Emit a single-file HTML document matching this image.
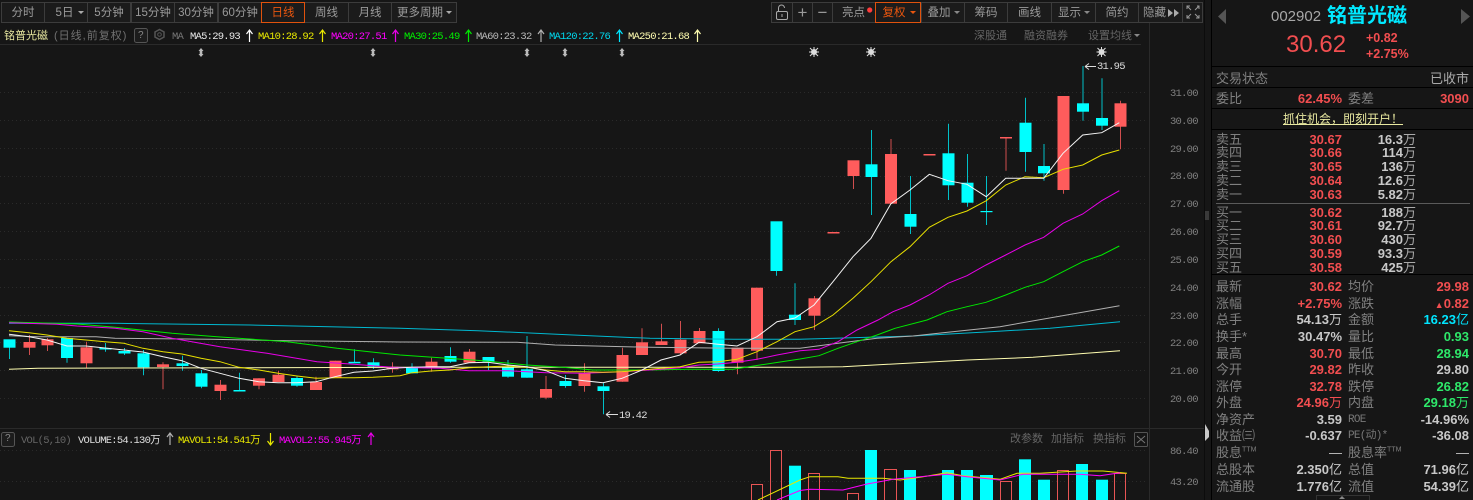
<!DOCTYPE html>
<html lang="zh"><head><meta charset="utf-8"><title>铭普光磁</title>
<style>
html,body{margin:0;padding:0;background:#161616;width:1473px;height:500px;overflow:hidden}
body{position:relative;font-family:"Liberation Sans","WenQuanYi Zen Hei","Noto Sans CJK SC",sans-serif;color:#808080}
svg{position:absolute;left:0;top:0}
.t{position:absolute;white-space:nowrap;line-height:16px;font-size:13px;margin-top:1px}
.b{position:absolute;top:2px;height:19px;line-height:20px;border:1px solid #3c3c3c;background:#1b1b1b;color:#9a9a9a;font-size:11.5px;text-align:center;box-sizing:content-box;margin-left:-1px}
.o{border:1px solid #e0520d;color:#e8560f;z-index:2;height:19px}
.m{font-family:"Liberation Mono","WenQuanYi Zen Hei",monospace;font-size:10.5px;letter-spacing:-.75px;margin-top:2px}
.n{font-weight:bold;font-family:"Liberation Sans","WenQuanYi Zen Hei",sans-serif}
.s{font-size:11px;color:#666}
.r{color:#f24e50}.g{color:#2ee86a}.w{color:#c8c8c8}.c{color:#00e5ff}
.v{font-weight:normal;font-size:13px}
</style></head><body>
<svg width="1473" height="500" viewBox="0 0 1473 500" fill="none">
<g stroke="#2a2a2a" stroke-dasharray="1 3">
<path d="M0 92.5H1148M0 120.5H1148M0 148.5H1148M0 176.5H1148M0 203.5H1148M0 231.5H1148M0 259.5H1148M0 287.5H1148M0 315.5H1148M0 342.5H1148M0 370.5H1148M0 398.5H1148M0 450.5H1148M0 481.5H1148"/>
</g>
<path d="M0 44.5H1141M0 428.5H1204M1149.5 23V500" stroke="#2a2a2a"/>
<path d="M1216 203.5H1470" stroke="#5a5a5a"/>
<path d="M1204.5 0V500" stroke="#0c0c0c"/>
<path d="M1211.5 0V500M1212 66.5H1473M1212 87.5H1473M1212 108.5H1473M1212 129.5H1473M1212 274.5H1473" stroke="#000"/>
<!-- volume -->
<g fill="#00ffff">
<rect x="789" y="465.7" width="12" height="35"/><rect x="865" y="450" width="12" height="50"/><rect x="904" y="470" width="12" height="30"/><rect x="942" y="470" width="12" height="30"/><rect x="961" y="470" width="12" height="30"/><rect x="980" y="475" width="13" height="25"/><rect x="1019" y="459.3" width="12" height="41"/><rect x="1038" y="479.7" width="12" height="21"/><rect x="1076" y="464" width="12" height="36"/><rect x="1096" y="479.7" width="12" height="21"/>
</g>
<g stroke="#e85555">
<rect x="751.5" y="484.5" width="11" height="20"/><rect x="770.5" y="450.5" width="11" height="54"/><rect x="808.5" y="473.5" width="11" height="30"/><rect x="847.5" y="493.5" width="11" height="10"/><rect x="884.5" y="469.5" width="12" height="35"/><rect x="1000.5" y="481.5" width="11" height="22"/><rect x="1057.5" y="470.5" width="11" height="34"/><rect x="1114.5" y="473.5" width="11" height="30"/>
</g>
<path d="M758 500L800 480L810 476.7H838L848 478.3H883L900 480L920 477.3L947 472.7L963 475.7L1000 479.3L1017 473.3H1040L1077 471H1103L1127 473.3" stroke="#e8e800"/>
<path d="M777 500L800 490.5L810 489.3L843 490L867 484L893 479.3L920 476.7L947 474.3L967 476.7L1000 480L1023 474.3H1080L1100 475.7L1120 472.7" stroke="#ff00ff"/>
<!-- wicks -->
<path stroke="#00c0c8" d="M9.5 347V359M67 338V362.7M105.5 343V351.7M124.5 348V355M143.5 350V375.3M182.5 355.7V370.7M201.5 370V388.3M239.5 372.7V390.3M297 376V386.7M354.5 349.3V362.3M373.5 358.3V369M412 363.3V373.3M450.5 347.3V362.7M488.5 357V370M508 360V377.7M527 336V377.7M565.5 375V387.7M603.5 382.7V414.3M718.5 328.3V371.7M776.5 271V275.7M795 283.3V325M871.5 130V215M910.5 176V234M948.5 123.7V200M967.5 154V206.7M986.5 176V225M1025.5 97.7V171.7M1044 144V180.7M1083 66V120.7M1102 78.3V130"/>
<path stroke="#d04e4e" d="M29.5 335V355M47.5 338V351M86.5 341.7V368M163 362.3V389.3M220.5 380V400M259 378.3V389.3M278.5 370.7V382M316 376.7V390M335.5 360.7V378M392.5 362.3V372.7M431.5 357.7V371.7M469.5 349V362.7M546 376V399.3M584.5 363.3V391.7M622.5 347.7V381.7M642 328.3V355M661.5 323.7V345M680.5 321V355M699.5 328V343.3M737.5 347.7V374.3M757 287.7V360M814.5 296V330M853.5 176V189M891 139V154M1006 137.7V170.7M1063.5 190V193.7M1120.5 100.7V149.3"/>
<!-- cyan bodies -->
<g fill="#00ffff">
<rect x="3.5" y="339.3" width="12" height="8.4"/><rect x="61" y="338" width="12" height="20"/><rect x="99.5" y="348" width="12" height="1.5"/><rect x="118.5" y="351" width="12" height="2.5"/><rect x="137.5" y="353.3" width="12" height="14"/><rect x="176.5" y="363.3" width="12" height="2.7"/><rect x="195.5" y="373.3" width="12" height="13.4"/><rect x="233.5" y="390" width="12" height="1.5"/><rect x="291" y="378" width="12" height="7.7"/><rect x="348.5" y="361.8" width="12" height="1.5"/><rect x="367.5" y="362.3" width="12" height="4.4"/><rect x="406" y="367.3" width="12" height="6"/><rect x="444.5" y="356" width="12" height="5.7"/><rect x="482.5" y="357" width="12" height="4.7"/><rect x="502" y="367.3" width="12" height="9.4"/><rect x="521" y="369.3" width="12" height="8.4"/><rect x="559.5" y="381" width="12" height="5"/><rect x="597.5" y="386.3" width="12" height="4.7"/><rect x="712.5" y="331" width="12" height="40"/><rect x="770.5" y="221.3" width="12" height="49.7"/><rect x="789" y="314.7" width="12" height="5.3"/><rect x="865.5" y="164.3" width="12" height="12.7"/><rect x="904.5" y="214" width="12" height="12.7"/><rect x="942.5" y="153.3" width="12" height="32"/><rect x="961.5" y="182.7" width="12" height="20"/><rect x="980.5" y="211" width="12" height="1.2"/><rect x="1019.5" y="122.7" width="12" height="29.3"/><rect x="1038" y="166" width="12" height="7.3"/><rect x="1077" y="103.3" width="12" height="8.4"/><rect x="1096" y="118" width="12" height="7.7"/>
</g>
<!-- red bodies -->
<g fill="#ff5c5c">
<rect x="23.5" y="342" width="12" height="5.7"/><rect x="41.5" y="339.3" width="12" height="6"/><rect x="80.5" y="347.3" width="12" height="16"/><rect x="157" y="364.3" width="12" height="2.7"/><rect x="214.5" y="384.7" width="12" height="6.3"/><rect x="253" y="378.3" width="12" height="7.4"/><rect x="272.5" y="374.7" width="12" height="7.3"/><rect x="310" y="382" width="12" height="8"/><rect x="329.5" y="360.7" width="12" height="17.3"/><rect x="386.5" y="366.7" width="12" height="2.6"/><rect x="425.5" y="361.7" width="12" height="5.6"/><rect x="463.5" y="351.7" width="12" height="11"/><rect x="540" y="389" width="12" height="8.7"/><rect x="578.5" y="373.3" width="12" height="12.7"/><rect x="616.5" y="355" width="12" height="26.7"/><rect x="636" y="342.3" width="12" height="12.7"/><rect x="655.5" y="341.3" width="12" height="3.7"/><rect x="674.5" y="339.7" width="12" height="13.6"/><rect x="693.5" y="331" width="12" height="12.3"/><rect x="731.5" y="347.7" width="12" height="15"/><rect x="751" y="287.7" width="12" height="63"/><rect x="808.5" y="298.3" width="12" height="17.4"/><rect x="827.5" y="232" width="12" height="1.5"/><rect x="847.5" y="160.3" width="12" height="15.7"/><rect x="885" y="154" width="12" height="49.7"/><rect x="923.5" y="154" width="12" height="1.5"/><rect x="1000" y="137" width="12" height="1.5"/><rect x="1057.5" y="96" width="12" height="94"/><rect x="1114.5" y="103.3" width="12" height="23.4"/>
</g>
<!-- MAs -->
<g stroke-width="1">
<path stroke="#fffdb0" d="M9 369.3L38 368.3L400 367.3H800L843 366.7L967 360L1033 357.3L1120 350.7"/>
<path stroke="#00b8d0" d="M9 323.3H115L250 325L400 328.3L478 330.7L573 335L650 338.3L733 339.3H800L913 336L990 331.7L1050 328.3L1120 321.7"/>
<path stroke="#b0b0b0" d="M9 335.7L38 336.7H96L115 338.3L210 339.3L287 340.7L382 341.7L400 342L517 342.3L555 345L650 347.3L733 348.3H800L838 343.3L877 338.3L913 336L943 332.7L1000 326.7L1119.5 305.7"/>
<path stroke="#00e800" d="M9 322L77 324L115 327.3L172 333.3L217 336.7L287 341.7L337 348.3L400 355L440 357.7L483 360.7L527 365L563 367.3L593 370H650L687 369.3H733L760 365L800 359L819 355.7L838 348.3L857 341.7L877 335L895 328.3L927 320L947 311.7L967 306.7L986 302.3L1005.7 295L1025 287.3L1043.7 281.7L1063 271.7L1082.7 261.7L1101.7 255L1119.3 246"/>
<path stroke="#e800e8" d="M9 322.7L57 324.3L77 326L115 328.3L143 331.7L172 338.3L220 346.7L267 353.3L317 361.7L354 364.3L392 367.3L440 368.3L469 370.7H508L546 372.7L584 373.3L622 371.7L661 369.3L680 367.7L699 365L718 364L737 362.3L757 359.3L777 355L800 350.7L819 349.3L838 341.7L857 330L878 320L893 311.7L910 305L929 295L948 283.3L967 275.7L986 265L1005.7 255L1025 245L1043.7 237.3L1063 223.3L1082.7 214L1101.7 200.7L1119.3 190.7"/>
<path stroke="#e8e000" d="M9 330.7L29 332.7L47 335L67 338.3L86 340L105 341.7L124 343.3L143 348.3L163 351.7L182 354L201 358.3L220 361.7L239 367.3L259 370L278 373.3L297 376L316 378.3L335 377.7L354 377.7L373 377.3L400 375.7L412 372.7L431 371L450 370L469 367.7L488 366.7L508 366L527 367.3L546 370L565 371.7H584L603 372.3L622 371.7L642 370L661 368.3L680 366.7L699 362.3L718 361.7L737 359.3L757 351.7L777 341.7L795 331.7L814 326.7L833 315L853 298.3L871 281.7L891 261.7L910 246.7L929.3 227.3L948 217.3L967 211L986.3 200.7L1005.7 185L1025 176.7L1043.7 177.7L1063 169.3L1082.7 165L1101.7 155L1119.3 150"/>
<path stroke="#f4f4f4" d="M9 334.3L29 336.7L47 340L67 346H86L105 348L124 350L143 352L163 356.7L182 360.7L201 368.3L220 373.3L239 378.3L258.7 381.7L278 382.7H296.7L316 381.7L335 376.7L354 372.3L373 371L392 368.3L412 367.3L431 366.7H450L469 362.7L488 362.3L508 365L527 366.7L546 370.7L565 378.3L584 380.7L603 382.7L622 378.3L642 370L661 360L680 355L699 342.3L718 344.3L737 346L757 336.7L777 321.7L795 318L814 305L833 281.7L853 256.7L871 238.3L890.7 204L910 190L929.3 174.3L948 180.7L967 184.3L986.3 196.7L1005.7 178.3H1043.7L1063 153.3L1082.7 135L1101.7 132.7L1119.3 122.7"/>
</g>
<!-- MA arrows -->
<g stroke-width="1.2">
<path stroke="#fff" d="M249.5 42V30M246.5 34L249.5 30L252.5 34"/>
<path stroke="#e8e800" d="M322.5 42V30M319.5 34L322.5 30L325.5 34"/>
<path stroke="#e800e8" d="M395.5 42V30M392.5 34L395.5 30L398.5 34"/>
<path stroke="#00e800" d="M468.5 42V30M465.5 34L468.5 30L471.5 34"/>
<path stroke="#b0b0b0" d="M541 42V30M538 34L541 30L544 34"/>
<path stroke="#00e5ff" d="M619.5 42V30M616.5 34L619.5 30L622.5 34"/>
<path stroke="#fffdb0" d="M697.5 42V30M694.5 34L697.5 30L700.5 34"/>
<path stroke="#b0b0b0" d="M170 445V433M167 437L170 433L173 437"/>
<path stroke="#e8e800" d="M270.5 433V445M267.5 441L270.5 445L273.5 441"/>
<path stroke="#e800e8" d="M371 445V433M368 437L371 433L374 437"/>
</g>
<!-- markers -->
<g fill="#bbb"><path d="M201 48l2.5 3h-1.2v3h1.2l-2.5 3l-2.5-3h1.2v-3h-1.2zM373 48l2.5 3h-1.2v3h1.2l-2.5 3l-2.5-3h1.2v-3h-1.2zM527 48l2.5 3h-1.2v3h1.2l-2.5 3l-2.5-3h1.2v-3h-1.2zM565 48l2.5 3h-1.2v3h1.2l-2.5 3l-2.5-3h1.2v-3h-1.2zM622 48l2.5 3h-1.2v3h1.2l-2.5 3l-2.5-3h1.2v-3h-1.2z"/></g>
<g fill="#ddd" stroke="#ddd" stroke-width="1">
<circle cx="814" cy="52" r="2.5"/><path d="M810 48L818 56M818 48L810 56M814 47V57M809 52H819"/>
<circle cx="871" cy="52" r="2.5"/><path d="M867 48L875 56M875 48L867 56M871 47V57M866 52H876"/>
<circle cx="1101.5" cy="52" r="2.5"/><path d="M1097.5 48L1105.5 56M1105.5 48L1097.5 56M1101.5 47V57M1096.5 52H1106.5"/>
</g>
<!-- low / high arrows -->
<path stroke="#ddd" d="M606 414.5H618M606 414.5L610 411.5M606 414.5L610 417.5M1085 66.5H1096M1085 66.5L1089 63.5M1085 66.5L1089 69.5"/>
<!-- small boxes -->
<rect x="134.5" y="28.5" width="13" height="14" rx="2" stroke="#555" fill="#1c1c1c"/>
<rect x="1.5" y="432.5" width="13" height="14" rx="2" stroke="#555" fill="#1c1c1c"/>
<rect x="1134.5" y="432.5" width="13" height="14" rx="1" stroke="#555"/>
<path d="M1137 436L1145 443M1145 436L1137 443" stroke="#777"/>
<path d="M155 32l4.5-2.5l4.5 2.5v5l-4.5 2.5l-4.500-2.500z" stroke="#555" stroke-width="1.5"/><circle cx="159.5" cy="34.5" r="1.8" stroke="#555"/>
<!-- panel arrows/handles -->
<path d="M1226 9V24L1218 16.5Z" fill="#555"/><path d="M1461 9V24L1470 16.5Z" fill="#555"/>
<path d="M1205 424L1209 431V437L1205 441Z" fill="#c8c8c8"/>
<rect x="1205" y="211" width="4" height="9" fill="#3a3a3a"/>
<path d="M1316.5 500V495.5H1369.5V500" stroke="#333"/><path d="M1342 496l3 3h-6z" fill="#888"/>
</svg>
<div class="b" style="left:2px;width:42px">分时</div>
<div class="b" style="left:45px;width:42px"><span style="margin-right:3px">5日</span></div>
<div class="b" style="left:88px;width:42px">5分钟</div>
<div class="b" style="left:132px;width:42px">15分钟</div>
<div class="b" style="left:175px;width:42px">30分钟</div>
<div class="b" style="left:219px;width:42px">60分钟</div>
<div class="b" style="left:305px;width:43px">周线</div>
<div class="b" style="left:349px;width:42px">月线</div>
<div class="b" style="left:392px;width:64px;text-align:left;text-indent:5px">更多周期</div>
<div class="b o" style="left:262px;width:42px">日线</div>
<div class="b" style="left:772px;width:20px"></div>
<div class="b" style="left:793px;width:19px;font-size:17px">+</div>
<div class="b" style="left:813px;width:19px;font-size:17px">−</div>
<div class="b" style="left:833px;width:42px;text-indent:-1px">亮点</div>
<div class="b" style="left:922px;width:42px;text-indent:-8px">叠加</div>
<div class="b" style="left:965px;width:42px">筹码</div>
<div class="b" style="left:1008px;width:43px">画线</div>
<div class="b" style="left:1052px;width:43px;text-indent:-8px">显示</div>
<div class="b" style="left:1096px;width:42px">简约</div>
<div class="b" style="left:1139px;width:43px;text-align:left;text-indent:4px">隐藏</div>
<div class="b" style="left:1183px;width:19px"></div>
<div class="b o" style="left:876px;width:44px;text-indent:-8px">复权</div>
<svg width="1473" height="500" viewBox="0 0 1473 500" fill="none" style="z-index:3">
<circle cx="869.7" cy="10" r="2.6" fill="#ff3b3b"/>
<path d="M78 11h6l-3 3zM446 11h6l-3 3z" fill="#aaa"/><path d="M910 11h6l-3 3z" fill="#e8560f"/>
<path d="M954 11h6l-3 3zM1084 11h6l-3 3zM1134 34h6l-3 3z" fill="#888"/>
<path d="M1168 9v8l5-4zM1174 9v8l5-4z" fill="#aaa"/>
<rect x="776.5" y="11.5" width="11" height="8" rx="1.5" stroke="#aaa"/><path d="M778.5 11V8a3 3 0 0 1 6 0" stroke="#aaa"/><path d="M782 14v3" stroke="#aaa"/>
<path d="M1187 9V6H1190M1197 6H1199V9M1187 15V18H1190M1199 15V18H1196M1187 6L1191 10M1199 6L1195 10M1187 18L1191 14M1199 18L1195 14" stroke="#999"/>
</svg>
<div class="t" style="left:4px;top:27px;font-size:11px;color:#e8e8a0">铭普光磁</div>
<div class="t" style="left:54px;top:27px;font-size:11px;color:#707070;letter-spacing:1px">(日线,前复权)</div>
<div class="t" style="left:138px;top:27px;font-size:10px;color:#888">?</div>
<div class="t m" style="left:172px;top:27px;color:#777">MA</div>
<div class="t m" style="left:190px;top:27px;color:#e8e8e8">MA5:29.93</div>
<div class="t m" style="left:258px;top:27px;color:#e8e800">MA10:28.92</div>
<div class="t m" style="left:331px;top:27px;color:#ff00ff">MA20:27.51</div>
<div class="t m" style="left:404px;top:27px;color:#00f000">MA30:25.49</div>
<div class="t m" style="left:476px;top:27px;color:#b8b8b8">MA60:23.32</div>
<div class="t m" style="left:549px;top:27px;color:#00d8ee">MA120:22.76</div>
<div class="t m" style="left:628px;top:27px;color:#fffdb0">MA250:21.68</div>
<div class="t s" style="left:974px;top:27px">深股通</div>
<div class="t s" style="left:1024px;top:27px">融资融券</div>
<div class="t s" style="left:1088px;top:27px">设置均线</div>
<div class="t" style="left:5px;top:430px;font-size:10px;color:#888">?</div>
<div class="t m" style="left:21px;top:431px;color:#666">VOL(5,10)</div>
<div class="t m" style="left:78px;top:431px;color:#e0e0e0">VOLUME:54.130万</div>
<div class="t m" style="left:178px;top:431px;color:#e8e800">MAVOL1:54.541万</div>
<div class="t m" style="left:279px;top:431px;color:#ff00ff">MAVOL2:55.945万</div>
<div class="t s" style="left:1010px;top:430px">改参数</div>
<div class="t s" style="left:1051px;top:430px">加指标</div>
<div class="t s" style="left:1093px;top:430px">换指标</div>
<div class="t m" style="left:619px;top:406px;color:#ddd">19.42</div>
<div class="t m" style="left:1097px;top:57px;color:#ddd">31.95</div>
<div class="t m" style="left:1170px;top:84px;color:#808080">31.00</div>
<div class="t m" style="left:1170px;top:112px;color:#808080">30.00</div>
<div class="t m" style="left:1170px;top:140px;color:#808080">29.00</div>
<div class="t m" style="left:1170px;top:167px;color:#808080">28.00</div>
<div class="t m" style="left:1170px;top:195px;color:#808080">27.00</div>
<div class="t m" style="left:1170px;top:223px;color:#808080">26.00</div>
<div class="t m" style="left:1170px;top:251px;color:#808080">25.00</div>
<div class="t m" style="left:1170px;top:279px;color:#808080">24.00</div>
<div class="t m" style="left:1170px;top:307px;color:#808080">23.00</div>
<div class="t m" style="left:1170px;top:334px;color:#808080">22.00</div>
<div class="t m" style="left:1170px;top:362px;color:#808080">21.00</div>
<div class="t m" style="left:1170px;top:390px;color:#808080">20.00</div>
<div class="t m" style="left:1170px;top:442px;color:#808080">86.40</div>
<div class="t m" style="left:1170px;top:473px;color:#808080">43.20</div>
<!-- right panel -->
<div class="t" style="left:1271px;top:8px;font-size:15px;color:#a8a8a8">002902</div>
<div class="t c" style="left:1327px;top:5px;font-size:20px;line-height:20px;font-weight:bold;color:#00e8ff">铭普光磁</div>
<div class="t r" style="left:1286px;top:32px;font-size:24px;line-height:24px;color:#f24e50">30.62</div>
<div class="t r n" style="left:1366px;top:29px;font-size:12.5px">+0.82</div>
<div class="t r n" style="left:1366px;top:45px;font-size:12.5px">+2.75%</div>
<div class="t" style="left:1216px;top:70px">交易状态</div>
<div class="t" style="right:4px;top:70px;color:#aaa">已收市</div>
<div class="t" style="left:1216px;top:90px">委比</div>
<div class="t r n" style="right:131px;top:90px">62.45%</div>
<div class="t" style="left:1348px;top:90px">委差</div>
<div class="t r n" style="right:4px;top:90px">3090</div>
<div class="t" style="left:1283px;top:110px;font-size:12px;color:#e8e8a0;text-decoration:underline">抓住机会，即刻开户！</div>
<div class="t" style="left:1216px;top:131px">卖五</div><div class="t r n" style="right:131px;top:131px">30.67</div><div class="t n w" style="right:70px;top:131px">16.3</div><div class="t" style="left:1403px;top:131px;color:#aaa">万</div>
<div class="t" style="left:1216px;top:144px">卖四</div><div class="t r n" style="right:131px;top:144px">30.66</div><div class="t n w" style="right:70px;top:144px">114</div><div class="t" style="left:1403px;top:144px;color:#aaa">万</div>
<div class="t" style="left:1216px;top:158px">卖三</div><div class="t r n" style="right:131px;top:158px">30.65</div><div class="t n w" style="right:70px;top:158px">136</div><div class="t" style="left:1403px;top:158px;color:#aaa">万</div>
<div class="t" style="left:1216px;top:172px">卖二</div><div class="t r n" style="right:131px;top:172px">30.64</div><div class="t n w" style="right:70px;top:172px">12.6</div><div class="t" style="left:1403px;top:172px;color:#aaa">万</div>
<div class="t" style="left:1216px;top:186px">卖一</div><div class="t r n" style="right:131px;top:186px">30.63</div><div class="t n w" style="right:70px;top:186px">5.82</div><div class="t" style="left:1403px;top:186px;color:#aaa">万</div>
<div class="t" style="left:1216px;top:204px">买一</div><div class="t r n" style="right:131px;top:204px">30.62</div><div class="t n w" style="right:70px;top:204px">188</div><div class="t" style="left:1403px;top:204px;color:#aaa">万</div>
<div class="t" style="left:1216px;top:217px">买二</div><div class="t r n" style="right:131px;top:217px">30.61</div><div class="t n w" style="right:70px;top:217px">92.7</div><div class="t" style="left:1403px;top:217px;color:#aaa">万</div>
<div class="t" style="left:1216px;top:231px">买三</div><div class="t r n" style="right:131px;top:231px">30.60</div><div class="t n w" style="right:70px;top:231px">430</div><div class="t" style="left:1403px;top:231px;color:#aaa">万</div>
<div class="t" style="left:1216px;top:245px">买四</div><div class="t r n" style="right:131px;top:245px">30.59</div><div class="t n w" style="right:70px;top:245px">93.3</div><div class="t" style="left:1403px;top:245px;color:#aaa">万</div>
<div class="t" style="left:1216px;top:259px">买五</div><div class="t r n" style="right:131px;top:259px">30.58</div><div class="t n w" style="right:70px;top:259px">425</div><div class="t" style="left:1403px;top:259px;color:#aaa">万</div>
<div class="t" style="left:1216px;top:278px">最新</div><div class="t r n" style="right:131px;top:278px">30.62</div><div class="t" style="left:1348px;top:278px">均价</div><div class="t r n" style="right:4px;top:278px">29.98</div>
<div class="t" style="left:1216px;top:295px">涨幅</div><div class="t r n" style="right:131px;top:295px">+2.75%</div><div class="t" style="left:1348px;top:295px">涨跌</div><div class="t r n" style="right:4px;top:295px"><span style="font-size:9px">▲</span>0.82</div>
<div class="t" style="left:1216px;top:311px">总手</div><div class="t w n" style="right:131px;top:311px">54.13<span class="v">万</span></div><div class="t" style="left:1348px;top:311px">金额</div><div class="t c n" style="right:4px;top:311px">16.23<span class="v">亿</span></div>
<div class="t" style="left:1216px;top:328px">换手*</div><div class="t w n" style="right:131px;top:328px">30.47%</div><div class="t" style="left:1348px;top:328px">量比</div><div class="t g n" style="right:4px;top:328px">0.93</div>
<div class="t" style="left:1216px;top:345px">最高</div><div class="t r n" style="right:131px;top:345px">30.70</div><div class="t" style="left:1348px;top:345px">最低</div><div class="t g n" style="right:4px;top:345px">28.94</div>
<div class="t" style="left:1216px;top:361px">今开</div><div class="t r n" style="right:131px;top:361px">29.82</div><div class="t" style="left:1348px;top:361px">昨收</div><div class="t w n" style="right:4px;top:361px">29.80</div>
<div class="t" style="left:1216px;top:378px">涨停</div><div class="t r n" style="right:131px;top:378px">32.78</div><div class="t" style="left:1348px;top:378px">跌停</div><div class="t g n" style="right:4px;top:378px">26.82</div>
<div class="t" style="left:1216px;top:394px">外盘</div><div class="t r n" style="right:131px;top:394px">24.96<span class="v">万</span></div><div class="t" style="left:1348px;top:394px">内盘</div><div class="t g n" style="right:4px;top:394px">29.18<span class="v">万</span></div>
<div class="t" style="left:1216px;top:411px">净资产</div><div class="t w n" style="right:131px;top:411px">3.59</div><div class="t m" style="left:1348px;top:410px;color:#777;font-size:11px">ROE</div><div class="t w n" style="right:4px;top:411px">-14.96%</div>
<div class="t" style="left:1216px;top:427px">收益㈢</div><div class="t w n" style="right:131px;top:427px">-0.637</div><div class="t m" style="left:1348px;top:426px;color:#777;font-size:11px">PE(动)*</div><div class="t w n" style="right:4px;top:427px">-36.08</div>
<div class="t" style="left:1216px;top:444px">股息<sup style="font-size:7px;line-height:0">TTM</sup></div><div class="t w" style="right:131px;top:444px">—</div><div class="t" style="left:1348px;top:444px">股息率<sup style="font-size:7px;line-height:0">TTM</sup></div><div class="t w" style="right:4px;top:444px">—</div>
<div class="t" style="left:1216px;top:461px">总股本</div><div class="t w n" style="right:131px;top:461px">2.350<span class="v">亿</span></div><div class="t" style="left:1348px;top:461px">总值</div><div class="t w n" style="right:4px;top:461px">71.96<span class="v">亿</span></div>
<div class="t" style="left:1216px;top:478px">流通股</div><div class="t w n" style="right:131px;top:478px">1.776<span class="v">亿</span></div><div class="t" style="left:1348px;top:478px">流值</div><div class="t w n" style="right:4px;top:478px">54.39<span class="v">亿</span></div>
</body></html>
